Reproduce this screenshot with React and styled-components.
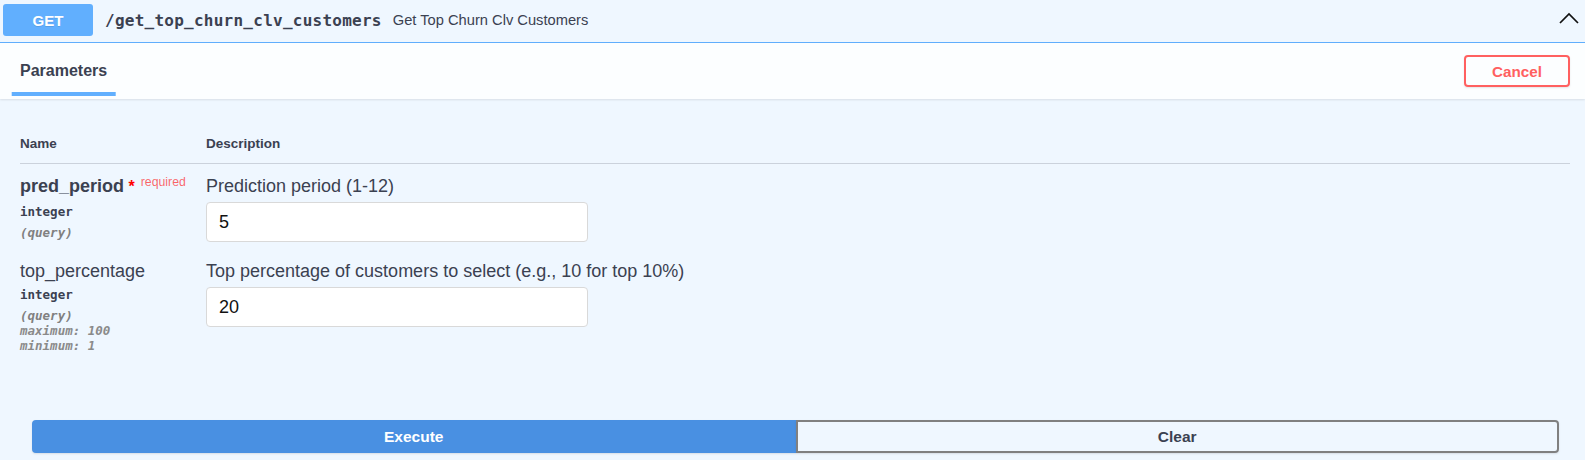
import React from "react";
import styled, { createGlobalStyle } from "styled-components";

const GlobalStyle = createGlobalStyle`
  html, body {
    margin: 0;
    padding: 0;
    background: #fff;
  }
  body {
    font-family: "Liberation Sans", Arial, sans-serif;
    color: #3b4151;
  }
  * {
    box-sizing: border-box;
  }
`;

const params = [
  {
    name: "pred_period",
    required: true,
    type: "integer",
    location: "(query)",
    extras: [],
    description: "Prediction period (1-12)",
    value: "5",
  },
  {
    name: "top_percentage",
    required: false,
    type: "integer",
    location: "(query)",
    extras: ["maximum: 100", "minimum: 1"],
    description: "Top percentage of customers to select (e.g., 10 for top 10%)",
    value: "20",
  },
];

const App = () => {
  return (
    <>
      <GlobalStyle />
      <Opblock>
        <Summary>
          <Method>GET</Method>
          <Path>/get_top_churn_clv_customers</Path>
          <SummaryDescription>Get Top Churn Clv Customers</SummaryDescription>
          <Arrow width="20" height="12" viewBox="0 0 20 12" aria-hidden="true">
            <polyline
              points="1,11 10,2 19,11"
              fill="none"
              stroke="#111"
              strokeWidth="1.7"
            />
          </Arrow>
        </Summary>

        <SectionHeader>
          <TabItem>
            <TabLabel>Parameters</TabLabel>
          </TabItem>
          <CancelButton>Cancel</CancelButton>
        </SectionHeader>

        <TableContainer>
          <HeadRow>
            <NameCol>Name</NameCol>
            <DescCol>Description</DescCol>
          </HeadRow>

          {params.map((p) => (
            <ParamRow key={p.name}>
              <NameCell>
                <ParamName $required={p.required}>
                  {p.name}
                  {p.required && (
                    <>
                      <Star>&nbsp;*</Star>
                      <RequiredTag>required</RequiredTag>
                    </>
                  )}
                </ParamName>
                <ParamType>{p.type}</ParamType>
                <ParamIn>{p.location}</ParamIn>
                {p.extras.map((x) => (
                  <ParamExtra key={x}>{x}</ParamExtra>
                ))}
              </NameCell>
              <DescCell>
                <DescText>{p.description}</DescText>
                <ParamInput type="text" defaultValue={p.value} />
              </DescCell>
            </ParamRow>
          ))}
        </TableContainer>

        <BtnGroup>
          <ExecuteButton>Execute</ExecuteButton>
          <ClearButton>Clear</ClearButton>
        </BtnGroup>
      </Opblock>
    </>
  );
};

const Opblock = styled.div`
  background: rgba(97, 175, 254, 0.1);
  min-height: 460px;
`;

const Summary = styled.div`
  display: flex;
  align-items: center;
  height: 43px;
  padding: 4px 6px 6px 3px;
  border-bottom: 1px solid #61affe;
`;

const Method = styled.span`
  display: flex;
  align-items: center;
  justify-content: center;
  width: 90px;
  height: 32px;
  border-radius: 3px;
  background: #61affe;
  color: #fff;
  font-size: 15px;
  font-weight: 700;
  text-shadow: 0 1px 0 rgba(0, 0, 0, 0.1);
`;

const Path = styled.span`
  margin-left: 12px;
  font-family: "DejaVu Sans Mono", "Liberation Mono", monospace;
  font-size: 16px;
  font-weight: 700;
  letter-spacing: 0.25px;
  color: #3b4151;
`;

const SummaryDescription = styled.span`
  margin-left: 11px;
  font-size: 14.7px;
  color: #3b4151;
  flex: 1;
`;

const Arrow = styled.svg`
  display: block;
  margin-top: -4px;
`;

const SectionHeader = styled.div`
  display: flex;
  align-items: center;
  justify-content: space-between;
  height: 56px;
  padding: 0 15px 0 20px;
  background: rgba(255, 255, 255, 0.8);
  box-shadow: 0 1px 2px rgba(0, 0, 0, 0.1);
`;

const TabItem = styled.div`
  display: flex;
  align-items: center;
`;

const TabLabel = styled.h4`
  position: relative;
  margin: 0;
  font-size: 16px;
  font-weight: 700;
  line-height: 18px;
  color: #3b4151;

  &::after {
    content: "";
    position: absolute;
    left: 50%;
    top: calc(100% + 12px);
    width: 120%;
    height: 4px;
    transform: translateX(-50%);
    background: #61affe;
  }
`;

const CancelButton = styled.button`
  width: 106px;
  height: 32px;
  padding: 0;
  border: 2px solid #ff6060;
  border-radius: 4px;
  background: transparent;
  color: #ff6060;
  font-family: "Liberation Sans", Arial, sans-serif;
  font-size: 15.2px;
  font-weight: 700;
  box-shadow: 0 1px 2px rgba(0, 0, 0, 0.1);
  cursor: pointer;
`;

const TableContainer = styled.div`
  padding: 26px 15px 0 20px;
`;

const HeadRow = styled.div`
  display: flex;
  padding: 12px 0;
  border-bottom: 1px solid rgba(59, 65, 81, 0.2);
  font-size: 13.5px;
  font-weight: 700;
  line-height: 14px;
`;

const NameCol = styled.div`
  width: 186px;
  flex-shrink: 0;
`;

const DescCol = styled.div`
  flex: 1;
`;

const ParamRow = styled.div`
  display: flex;
  padding: 12px 0 7px;
`;

const NameCell = styled.div`
  width: 186px;
  flex-shrink: 0;
`;

const DescCell = styled.div`
  flex: 1;
`;

const ParamName = styled.div`
  font-size: 18px;
  line-height: 20px;
  font-weight: ${(p) => (p.$required ? 600 : 400)};
  color: #3b4151;
  white-space: nowrap;
`;

const Star = styled.span`
  color: red;
  font-size: 16px;
`;

const RequiredTag = styled.span`
  position: relative;
  top: -6px;
  padding: 0 5px 0 6px;
  font-size: 12.3px;
  font-weight: 400;
  color: rgba(255, 0, 0, 0.6);
`;

const monoSmall = `
  font-family: "DejaVu Sans Mono", "Liberation Mono", monospace;
  font-size: 12.5px;
  line-height: 15px;
`;

const ParamType = styled.div`
  ${monoSmall}
  margin-top: 6px;
  font-weight: 600;
  color: #3b4151;
`;

const ParamIn = styled.div`
  ${monoSmall}
  margin-top: 6px;
  font-style: italic;
  font-weight: 600;
  color: #808080;
`;

const ParamExtra = styled.div`
  ${monoSmall}
  font-style: italic;
  font-weight: 600;
  color: #8a8a8a;
`;

const DescText = styled.div`
  font-size: 18px;
  line-height: 20px;
  color: #3b4151;
`;

const ParamInput = styled.input`
  display: block;
  width: 382px;
  height: 40px;
  margin-top: 6px;
  padding: 8px 12px;
  border: 1px solid #d9d9d9;
  border-radius: 4px;
  background: #fff;
  font-family: "Liberation Sans", Arial, sans-serif;
  font-size: 18px;
  color: #111;
  outline: none;
`;

const BtnGroup = styled.div`
  display: flex;
  padding: 60px 26px 0 32px;
`;

const baseBtn = `
  flex: 1;
  height: 33px;
  padding: 0;
  font-family: "Liberation Sans", Arial, sans-serif;
  font-size: 15.5px;
  font-weight: 700;
  box-shadow: 0 1px 2px rgba(0, 0, 0, 0.1);
  cursor: pointer;
`;

const ExecuteButton = styled.button`
  ${baseBtn}
  border: 2px solid #4990e2;
  border-radius: 4px 0 0 4px;
  background: #4990e2;
  color: #fff;
`;

const ClearButton = styled.button`
  ${baseBtn}
  border: 2px solid #808080;
  border-radius: 0 4px 4px 0;
  background: transparent;
  color: #3b4151;
`;

export default App;
